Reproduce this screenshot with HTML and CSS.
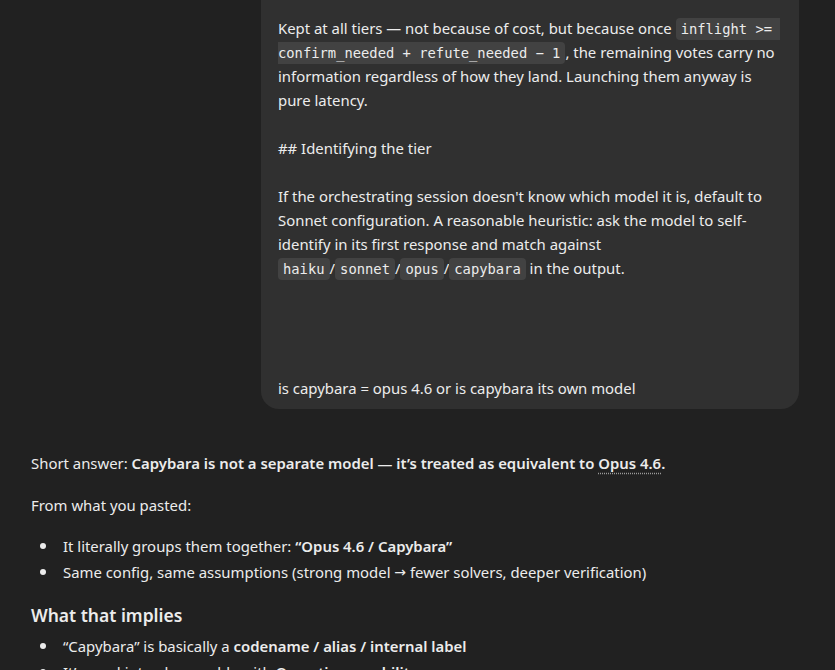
FILE: index.html
```html
<!DOCTYPE html>
<html lang="en">
<head>
<meta charset="utf-8">
<title>Chat</title>
<link rel="stylesheet" href="styles.css">
</head>
<body>
<main class="thread">
  <div class="user-row">
    <div class="bubble"><p class="pre">Kept at all tiers — not because of cost, but because once <code>inflight &gt;= confirm_needed + refute_needed − 1</code>, the remaining votes carry no information regardless of how they land. Launching them anyway is pure latency.

## Identifying the tier

If the orchestrating session doesn't know which model it is, default to Sonnet configuration. A reasonable heuristic: ask the model to self-identify in its first response and match against <code>haiku</code>/<code>sonnet</code>/<code>opus</code>/<code>capybara</code> in the output.




is capybara = opus 4.6 or is capybara its own model</p></div>
  </div>
  <div class="answer">
    <p>Short answer: <strong>Capybara is not a separate model — it’s treated as equivalent to <span class="dotted">Opus 4.6</span>.</strong></p>
    <p>From what you pasted:</p>
    <ul>
      <li>It literally groups them together: <strong>“Opus 4.6 / Capybara”</strong></li>
      <li>Same config, same assumptions (strong model <span class="arrow">→</span> fewer solvers, deeper verification)</li>
    </ul>
    <h3>What that implies</h3>
    <ul>
      <li>“Capybara” is basically a <strong>codename / alias / internal label</strong></li>
      <li>It’s used interchangeably with <strong>Opus-tier capability</strong></li>
    </ul>
  </div>
</main>
</body>
</html>
```
FILE: styles.css
```css
html, body {
  margin: 0;
  padding: 0;
  background: #212121;
}
body {
  font-family: "Noto Sans", "Open Sans", sans-serif;
  font-size: 14.9px;
  color: #ececec;
}
.thread {
  width: 768px;
  margin-left: 31px;
}
.user-row {
  display: flex;
  justify-content: flex-end;
}
.bubble {
  width: 538px;
  box-sizing: border-box;
  background: #303030;
  border-radius: 0 0 18px 18px;
  padding: 16px 12px 9px 17px;
}
.pre {
  white-space: pre-wrap;
  margin: 0;
  line-height: 24px;
}
code {
  font-family: "DejaVu Sans Mono", monospace;
  font-size: 13.8px;
  line-height: 1;
  background: #424242;
  border-radius: 4px;
  padding: 3px 5px;
}
.answer {
  padding-top: 40px;
}
.answer p {
  margin: 0 0 14px;
  line-height: 28px;
}
.answer strong {
  font-weight: 600;
}
.dotted {
  text-decoration: underline dotted #9a9a9a;
  text-underline-offset: 4px;
}
.arrow {
  font-family: "DejaVu Sans", sans-serif;
  font-size: 14px;
}
ul {
  list-style: none;
  margin: 0 0 16px;
  padding-left: 9px;
}
li {
  display: flex;
  align-items: center;
  line-height: 26px;
  white-space: pre-wrap;
}
li::before {
  content: "";
  flex: none;
  width: 6px;
  height: 6px;
  border-radius: 50%;
  background: #ececec;
  margin-right: 17px;
}
h3 {
  margin: 3px 0 4px;
  font-size: 17.5px;
  font-weight: 600;
  line-height: 28px;
}
```
